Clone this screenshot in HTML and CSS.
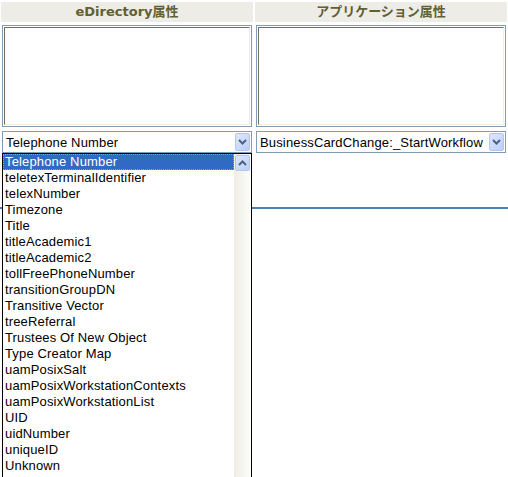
FILE: index.html
```html
<!DOCTYPE html>
<html lang="ja">
<head>
<meta charset="UTF-8">
<title>属性マッピング</title>
<meta name="viewport" content="width=device-width, initial-scale=1.0">
<link rel="stylesheet" href="styles.css">
</head>
<body>

<div class="panels">

    <!-- eDirectory side -->
    <div class="col">
        <div class="col-head">eDirectory属性</div>
        <div class="memo"><textarea></textarea></div>
        <div class="combo">
            <span class="combo-text">Telephone Number</span>
            <span class="btn">
                <svg width="9" height="6" viewBox="0 0 9 6"><polyline points="1,1 4.5,4.5 8,1" fill="none" stroke="#4d6185" stroke-width="2"/></svg>
            </span>
        </div>
    </div>

    <!-- application side -->
    <div class="col">
        <div class="col-head">アプリケーション属性</div>
        <div class="memo"><textarea></textarea></div>
        <div class="combo">
            <span class="combo-text">BusinessCardChange:_StartWorkflow</span>
            <span class="btn">
                <svg width="9" height="6" viewBox="0 0 9 6"><polyline points="1,1 4.5,4.5 8,1" fill="none" stroke="#4d6185" stroke-width="2"/></svg>
            </span>
        </div>
    </div>

</div>

<div class="rule"></div>

<!-- open list of the first combo -->
<div class="dropdown">
    <ul class="options">
        <li class="selected">Telephone Number</li>
        <li>teletexTerminalIdentifier</li>
        <li>telexNumber</li>
        <li>Timezone</li>
        <li>Title</li>
        <li>titleAcademic1</li>
        <li>titleAcademic2</li>
        <li>tollFreePhoneNumber</li>
        <li>transitionGroupDN</li>
        <li>Transitive Vector</li>
        <li>treeReferral</li>
        <li>Trustees Of New Object</li>
        <li>Type Creator Map</li>
        <li>uamPosixSalt</li>
        <li>uamPosixWorkstationContexts</li>
        <li>uamPosixWorkstationList</li>
        <li>UID</li>
        <li>uidNumber</li>
        <li>uniqueID</li>
        <li>Unknown</li>
    </ul>
    <div class="scroll">
        <span class="btn">
            <svg width="9" height="6" viewBox="0 0 9 6"><polyline points="1,5 4.5,1.5 8,5" fill="none" stroke="#4d6185" stroke-width="2"/></svg>
        </span>
    </div>
</div>

</body>
</html>
```

FILE: styles.css
```css
* {
    margin: 0;
    padding: 0;
    box-sizing: border-box;
}

body {
    font-family: "Liberation Sans", Arial, sans-serif;
    font-size: 13px;
    letter-spacing: 0.15px;
    color: #000;
    background: #fff;
    position: relative;
    overflow: hidden;
    height: 477px;
}

.panels {
    display: grid;
    grid-template-columns: 252px 252px;
    column-gap: 2px;
    padding: 2px 1px 0;
}

.col {
    display: flex;
    flex-direction: column;
}

.col-head {
    height: 20px;
    line-height: 20px;
    background: #edece6;
    color: #606030;
    font-family: "DejaVu Sans", "Noto Sans CJK JP", sans-serif;
    font-weight: bold;
    font-size: 13px;
    letter-spacing: 0;
    text-align: center;
}

.memo {
    margin: 3px 1px 0;
    height: 102px;
    border: 1px solid #7f9db9;
    padding: 1px;
}

.memo textarea {
    display: block;
    width: 100%;
    height: 100%;
    resize: none;
    border: 1px solid;
    border-color: #716f64 #f1efe2 #f1efe2 #716f64;
    background: #fff;
    outline: none;
}

.combo {
    margin: 4px 1px 0;
    height: 22px;
    border: 1px solid #7f9db9;
    padding: 1px;
    display: flex;
    align-items: center;
}

.combo-text {
    padding-left: 2px;
    white-space: nowrap;
    overflow: hidden;
}

.btn {
    display: flex;
    align-items: center;
    justify-content: center;
    flex: none;
    width: 15px;
    height: 18px;
    margin-left: auto;
    border: 1px solid #b3c6f3;
    border-radius: 2px;
    background: linear-gradient(135deg, #dde7fe, #bccefa);
}

.rule {
    margin-top: 54px;
    height: 2px;
    background: #4682b8;
}

/* Dropdown list */
.dropdown {
    position: absolute;
    left: 2px;
    top: 153px;
    width: 250px;
    height: 340px;
    border: 1px solid #000;
    background: #fff;
    display: flex;
}

.options {
    list-style: none;
    flex: 1;
}

.options li {
    height: 16px;
    line-height: 16px;
    padding-left: 2px;
    white-space: nowrap;
}

.options li.selected {
    background: #316ac5;
    color: #fff;
    outline: 1px dotted #ce953a;
    outline-offset: -1px;
}

.scroll {
    width: 17px;
    padding: 1px 1px 0;
    background: linear-gradient(to right, #eeede5, #fdfdfb);
}

.scroll .btn {
    height: 16px;
}
```
